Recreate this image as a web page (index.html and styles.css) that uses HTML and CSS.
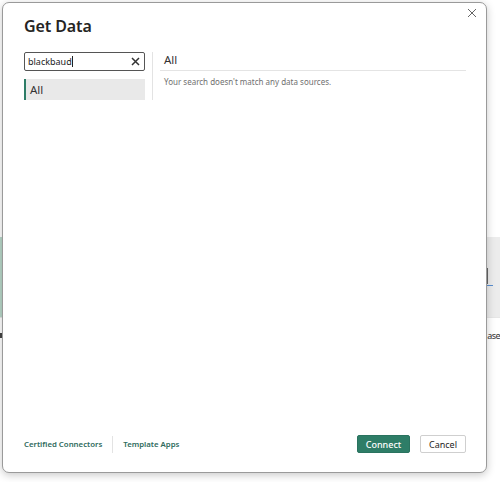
FILE: index.html
```html
<!DOCTYPE html>
<html>
<head>
<meta charset="utf-8">
<link rel="stylesheet" href="styles.css">
</head>
<body>
<div class="backdrop">
  <div class="band">
    <div class="band-left"></div>
    <div class="band-mid"></div>
    <div class="band-right"><span class="tick"></span><span class="dash"></span></div>
  </div>
  <div class="below">
    <span class="mark"></span>
    <span class="ase">ase</span>
  </div>
</div>

<div class="dialog">
  <button class="close" aria-label="Close">
    <svg width="10" height="10" viewBox="0 0 10 10"><path d="M1 1 L9 9 M9 1 L1 9" stroke="#666" stroke-width="1" fill="none"/></svg>
  </button>
  <h1 class="title">Get Data</h1>
  <div class="main">
    <div class="nav">
      <div class="search">
        <span class="search-text">blackbaud</span><span class="caret"></span>
        <svg class="clear" width="9" height="9" viewBox="0 0 9 9"><path d="M1 1 L8 8 M8 1 L1 8" stroke="#333" stroke-width="1.5" fill="none"/></svg>
      </div>
      <div class="nav-item">All</div>
    </div>
    <div class="divider"></div>
    <div class="content">
      <div class="content-head">All</div>
      <div class="empty">Your search doesn't match any data sources.</div>
    </div>
  </div>
  <div class="footer">
    <div class="links">
      <a class="link">Certified Connectors</a>
      <span class="link-sep"></span>
      <a class="link">Template Apps</a>
    </div>
    <div class="buttons">
      <button class="btn primary">Connect</button>
      <button class="btn secondary">Cancel</button>
    </div>
  </div>
</div>
</body>
</html>
```

FILE: styles.css
```css
* { box-sizing: border-box; }
html, body {
  margin: 0;
  padding: 0;
  width: 500px;
  height: 482px;
  background: #ffffff;
  font-family: "Noto Sans", "Open Sans", sans-serif;
  overflow: hidden;
}
body { position: relative; }

.backdrop {
  padding-top: 237px;
}
.band {
  display: flex;
  height: 80px;
}
.band-left {
  width: 3px;
  background: #b9d7c9;
}
.band-mid {
  flex: 1;
  background: #fbfbfb;
}
.band-right {
  width: 13px;
  background: #ececec;
  position: relative;
}
.tick {
  position: absolute;
  left: 0;
  top: 31px;
  width: 1px;
  height: 16px;
  background: #666;
}
.dash {
  position: absolute;
  left: 0;
  top: 48px;
  width: 6px;
  height: 1px;
  background: #5a8fd0;
}
.below {
  display: flex;
  justify-content: space-between;
  align-items: center;
  border-top: 1px solid #e6e6e6;
  height: 36px;
}
.mark {
  width: 2px;
  height: 5px;
  background: #444;
}
.ase {
  font-size: 9px;
  letter-spacing: -0.6px;
  color: #333;
  white-space: nowrap;
}

.dialog {
  position: absolute;
  left: 2px;
  top: 2px;
  width: 485px;
  height: 471px;
  background: #ffffff;
  border: 1px solid #9a9a9a;
  border-radius: 7px;
  box-shadow: 0 2px 8px rgba(0,0,0,0.22);
  display: flex;
  flex-direction: column;
  padding: 12px 20px 19px 21px;
}
.close {
  position: absolute;
  top: 2px;
  right: 6px;
  width: 16px;
  height: 16px;
  border: none;
  background: none;
  padding: 3px;
  display: flex;
}
.title {
  margin: 0;
  font-size: 16px;
  font-weight: 600;
  line-height: 22px;
  color: #252423;
  letter-spacing: -0.1px;
}
.main {
  display: flex;
  gap: 7px;
  margin-top: 15px;
  flex: 1;
  align-items: flex-start;
}
.nav {
  width: 121px;
  display: flex;
  flex-direction: column;
  gap: 8px;
}
.search {
  height: 19px;
  border: 1px solid #555;
  border-radius: 2px;
  display: flex;
  align-items: center;
  padding: 0 3px 0 3px;
  font-size: 9px;
  color: #222;
}
.caret {
  width: 1px;
  height: 11px;
  background: #222;
}
.clear {
  margin-left: auto;
  margin-right: 1px;
}
.nav-item {
  height: 21px;
  background: #e9e9e9;
  border-left: 2px solid #2e7d67;
  font-size: 11.5px;
  line-height: 21px;
  padding-left: 4px;
  color: #333;
}
.divider {
  width: 1px;
  height: 48px;
  background: #e3e3e3;
}
.content {
  flex: 1;
}
.content-head {
  height: 19px;
  font-size: 11.5px;
  line-height: 16px;
  padding-left: 4px;
  color: #333;
  border-bottom: 1px solid #e4e4e4;
}
.empty {
  margin-top: 5px;
  padding-left: 4px;
  font-size: 8px;
  line-height: 12px;
  color: #707070;
}
.footer {
  display: flex;
  justify-content: space-between;
  align-items: center;
  height: 18px;
}
.links {
  display: flex;
  align-items: center;
  gap: 10px;
}
.link {
  font-size: 7.8px;
  font-weight: 600;
  color: #2f6b5d;
}
.link-sep {
  width: 1px;
  height: 17px;
  background: #e3e3e3;
}
.buttons {
  display: flex;
  gap: 10px;
}
.btn {
  height: 18px;
  font-family: inherit;
  font-size: 9px;
  border-radius: 2px;
  padding: 0;
  display: flex;
  align-items: center;
  justify-content: center;
}
.primary {
  width: 53px;
  background: #2e7d67;
  border: 1px solid #2a735f;
  color: #ffffff;
  font-weight: 500;
}
.secondary {
  width: 46px;
  background: #ffffff;
  border: 1px solid #cfcfcf;
  color: #252423;
}
```
